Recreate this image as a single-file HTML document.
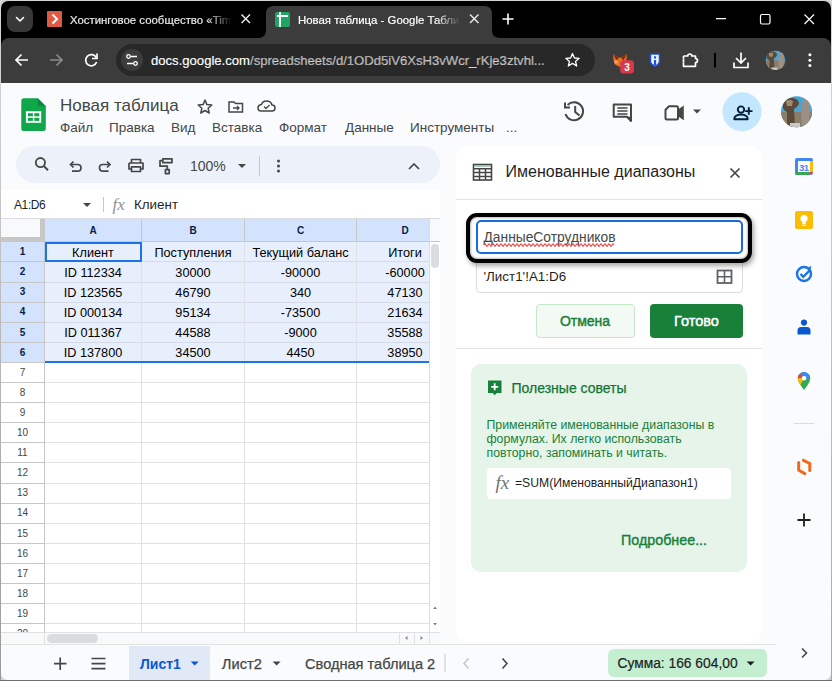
<!DOCTYPE html>
<html><head><meta charset="utf-8">
<style>
*{box-sizing:border-box;margin:0;padding:0}
html,body{width:832px;height:681px;overflow:hidden;background:#d4d4d4;font-family:"Liberation Sans",sans-serif}
#win{position:absolute;left:0;top:0;width:832px;height:681px;clip-path:inset(1px 1px 1px 1px round 7px);background:#f9fbfd}
.a{position:absolute}
.t{position:absolute;white-space:nowrap;line-height:1}
svg{position:absolute;overflow:visible}
</style></head><body>
<div style="position:absolute;left:0;top:0;width:1px;height:681px;background:linear-gradient(#d8d8d8,#9a9a9a)"></div><div style="position:absolute;left:831px;top:0;width:1px;height:681px;background:linear-gradient(#d8d8d8,#a8a8a8)"></div><div style="position:absolute;left:0;top:680px;width:832px;height:1px;background:#6e6e6e"></div>
<div id="win">
<!-- ===== TAB STRIP ===== -->
<div class="a" style="left:0;top:0;width:832px;height:50px;background:#000"></div>
<div class="a" style="left:7px;top:6px;width:26px;height:26px;border-radius:8px;background:#383838"></div>
<svg style="left:0;top:0" width="832" height="38">
  <path d="M16.5 17.5 L20 21 L23.5 17.5" stroke="#fff" stroke-width="1.6" fill="none" stroke-linecap="round" stroke-linejoin="round"/>
</svg>
<!-- tab1 -->
<div class="a" style="left:47px;top:11px;width:15px;height:16px;background:#df5a45;border-radius:1px"></div>
<svg style="left:0;top:0" width="832" height="38"><path d="M52.5 14.5 L57 19 L52.5 23.5" stroke="#fff" stroke-width="2" fill="none"/></svg>
<div class="t" style="left:70px;top:14.8px;font-size:11.4px;color:#e8e8e8;-webkit-text-stroke:0.2px #e8e8e8;width:162px;overflow:hidden;-webkit-mask-image:linear-gradient(to right,#000 138px,transparent 162px)">Хостинговое сообщество «Timeweb»</div>
<svg style="left:0;top:0" width="832" height="38"><path d="M241.5 14.5 L250 23 M250 14.5 L241.5 23" stroke="#e8e8e8" stroke-width="1.5"/></svg>
<!-- active tab -->
<svg style="left:0;top:0" width="832" height="38">
  <path d="M258 38 Q266 38 266 30 L266 14 Q266 6 274 6 L484 6 Q492 6 492 14 L492 30 Q492 38 500 38 Z" fill="#3c3c3c"/>
</svg>
<div class="a" style="left:275px;top:12px;width:15px;height:15px;background:#1fa463;border-radius:2px"></div>
<div class="a" style="left:277px;top:15px;width:11px;height:2px;background:#fff"></div>
<div class="a" style="left:279px;top:12px;width:2px;height:15px;background:#fff"></div>
<div class="t" style="left:298px;top:14.8px;font-size:11.4px;color:#fff;-webkit-text-stroke:0.2px #fff;width:162px;overflow:hidden;-webkit-mask-image:linear-gradient(to right,#000 138px,transparent 162px)">Новая таблица - Google Таблицы</div>
<svg style="left:0;top:0" width="832" height="38"><path d="M470 14.5 L478.5 23 M478.5 14.5 L470 23" stroke="#e8e8e8" stroke-width="1.5"/>
<path d="M508 13.5 V24.5 M502.5 19 H513.5" stroke="#fff" stroke-width="1.6"/>
<path d="M716 18.7 H726" stroke="#fff" stroke-width="1.2"/>
<rect x="760.5" y="14.5" width="9.5" height="9.5" rx="1.5" stroke="#fff" stroke-width="1.2" fill="none"/>
<path d="M804.5 14.5 L814 24 M814 14.5 L804.5 24" stroke="#fff" stroke-width="1.2"/>
</svg>

<!-- ===== TOOLBAR ===== -->
<div class="a" style="left:1px;top:38px;width:830px;height:45px;background:#3c3c3c;border-radius:8px 8px 0 0"></div>
<svg style="left:0;top:0" width="832" height="90">
  <path d="M28 60 H16.5 M21.5 54.5 L16 60 L21.5 65.5" stroke="#fff" stroke-width="1.7" fill="none"/>
  <path d="M50 60 H61.5 M56.5 54.5 L62 60 L56.5 65.5" stroke="#8a8a8a" stroke-width="1.7" fill="none"/>
  <path d="M96.2 57.5 A5.6 5.6 0 1 0 96.6 62" stroke="#fff" stroke-width="1.7" fill="none"/>
  <path d="M97 53.5 V58.5 H92" stroke="#fff" stroke-width="1.7" fill="none"/>
</svg>
<div class="a" style="left:116px;top:44px;width:479px;height:32px;border-radius:16px;background:#282828"></div>
<div class="a" style="left:121px;top:49px;width:22px;height:22px;border-radius:11px;background:#3c3c3c"></div>
<svg style="left:0;top:0" width="832" height="90">
  <circle cx="128.5" cy="56.5" r="1.8" stroke="#fff" stroke-width="1.3" fill="none"/>
  <path d="M131 56.5 H137" stroke="#fff" stroke-width="1.3"/>
  <circle cx="135.5" cy="63.5" r="1.8" stroke="#fff" stroke-width="1.3" fill="none"/>
  <path d="M127 63.5 H133" stroke="#fff" stroke-width="1.3"/>
</svg>
<div class="t" style="left:151px;top:54px;font-size:13.1px;color:#fff;-webkit-text-stroke:0.15px #fff">docs.google.com<span style="color:#a8a8a8">/spreadsheets/d/1ODd5iV6XsH3vWcr_rKje3ztvhl...</span></div>
<svg style="left:0;top:0" width="832" height="90">
  <path d="M572.5 53.5 L574.4 58 L579.2 58.3 L575.5 61.4 L576.7 66 L572.5 63.4 L568.3 66 L569.5 61.4 L565.8 58.3 L570.6 58 Z" stroke="#fff" stroke-width="1.3" fill="none" stroke-linejoin="round"/>
</svg>
<!-- extensions -->
<svg style="left:0;top:0" width="832" height="90">
  <path d="M613 54 L619 57.5 L621 57.5 L627 54 L626.5 59 L625 64 L620 67 L615 64.5 L613.5 60 Z" fill="#e8731f"/>
  <path d="M613 54 L619 57.5 L616.5 60.5 Z" fill="#8a2a0a"/>
  <path d="M627 54 L621 57.5 L623.5 60.5 Z" fill="#8a2a0a"/>
  <path d="M614 61 L617 60 L618 63 L615 64 Z" fill="#f8a06a"/>
  <rect x="620.2" y="60.2" width="13.7" height="13.3" rx="3.2" fill="#d8394d"/>
  <text x="627.1" y="71" font-size="10" font-weight="bold" fill="#fff" text-anchor="middle" font-family="Liberation Sans">3</text>
  <path d="M649.7 53.4 H660.2 V61.5 Q660.2 64.5 655 67.1 Q649.7 64.5 649.7 61.5 Z" fill="#1f4fe0"/>
  <path d="M651.2 54.8 H658.7 V61.3 Q658.7 63.6 655 65.5 Q651.2 63.6 651.2 61.3 Z" fill="#f2f6ff"/>
  <rect x="653.9" y="56.3" width="2.2" height="2.2" fill="#1f4fe0"/>
  <rect x="653.9" y="60" width="2.2" height="5" fill="#1f4fe0"/>
  <path d="M683.5 56 H687.8 A2 2 0 0 1 691.8 56 H695.5 V58.5 A2 2 0 0 1 695.5 62.5 V66.3 H683.5 V62.5 M683.5 58.5 V56" stroke="#fff" stroke-width="1.7" fill="none" stroke-linejoin="round"/>
  <path d="M683.5 58.5 V62.5" stroke="#fff" stroke-width="1.7"/>
  <path d="M715 53 V67.5" stroke="#000" stroke-width="2"/>
  <path d="M741 52.5 V63 M736 58 L741 63 L746 58 M734 62.5 V67.5 H748 V62.5" stroke="#fff" stroke-width="1.7" fill="none"/>
  <clipPath id="avc2"><circle cx="775.5" cy="60.3" r="9.8"/></clipPath>
  <g clip-path="url(#avc2)"><g transform="translate(775.5 60.3) scale(0.632) translate(-796.6 -111.8)">
    <rect x="780" y="96" width="34" height="32" fill="#4aa3d4"/>
    <rect x="780" y="112" width="34" height="16" fill="#8a7d6a"/>
    <path d="M783 104 Q786 97 793 98 Q799 99 799 104 Q797 108 794 109 L795 127 L787 127 L787 112 Q782 110 783 104 Z" fill="#5b4a3a"/>
    <path d="M786 101 Q790 99 793 101 L792 106 L787 106 Z" fill="#a08a70"/>
    <path d="M803 101 Q806 97 809 101 L810 110 L809 127 L802 127 L801 110 Z" fill="#9a9085"/>
    <path d="M790 123 H800 V127 H790 Z" fill="#c8c8c8"/>
  </g></g>
  <circle cx="809.9" cy="54.8" r="1.5" fill="#fff"/>
  <circle cx="809.9" cy="60.2" r="1.5" fill="#fff"/>
  <circle cx="809.9" cy="65.6" r="1.5" fill="#fff"/>
</svg>

<!-- ===== SHEETS HEADER ===== -->
<svg style="left:0;top:0" width="832" height="145">
  <path d="M23.8 98.3 H37.8 L45.8 106.3 V128.5 Q45.8 131 43.3 131 H23.8 Q21.3 131 21.3 128.5 V100.8 Q21.3 98.3 23.8 98.3 Z" fill="#0ea84b"/>
  <path d="M37.8 98.3 L45.8 106.3 H37.8 Z" fill="#0a8a3b"/>
  <rect x="25.9" y="111.2" width="15.3" height="11.6" fill="#fff"/>
  <rect x="27.9" y="113.2" width="5" height="3.1" fill="#0ea84b"/>
  <rect x="34.3" y="113.2" width="5" height="3.1" fill="#0ea84b"/>
  <rect x="27.9" y="117.8" width="5" height="3.1" fill="#0ea84b"/>
  <rect x="34.3" y="117.8" width="5" height="3.1" fill="#0ea84b"/>
</svg>
<div class="t" style="left:60px;top:97px;font-size:17px;color:#444746">Новая таблица</div>
<svg style="left:0;top:0" width="832" height="145">
  <path d="M205 100 L206.9 104.6 L211.8 105 L208.1 108.2 L209.2 113 L205 110.5 L200.8 113 L201.9 108.2 L198.2 105 L203.1 104.6 Z" stroke="#444746" stroke-width="1.5" fill="none" stroke-linejoin="round"/>
  <path d="M229 112 V102 H234 L235.5 103.5 H242.5 V112 Z" stroke="#444746" stroke-width="1.5" fill="none"/>
  <path d="M233 108 H239 M237 106 L239 108 L237 110" stroke="#444746" stroke-width="1.3" fill="none"/>
  <path d="M261 111 H272 Q275 111 275 108 Q275 105 272 105 Q271 101 266.5 101 Q262.5 101 261.5 104.5 Q258 105 258 108 Q258 111 261 111 Z" stroke="#444746" stroke-width="1.5" fill="none"/>
  <path d="M264 106.5 L266 108.5 L269.5 105" stroke="#444746" stroke-width="1.3" fill="none"/>
</svg>
<div class="t" style="left:60px;top:121px;font-size:13.5px;color:#444746;word-spacing:0">
 <span style="position:absolute;left:0">Файл</span><span style="position:absolute;left:49px">Правка</span><span style="position:absolute;left:111px">Вид</span><span style="position:absolute;left:152px">Вставка</span><span style="position:absolute;left:219px">Формат</span><span style="position:absolute;left:285px">Данные</span><span style="position:absolute;left:350px">Инструменты</span><span style="position:absolute;left:446px">...</span>
</div>
<svg style="left:0;top:0" width="832" height="145">
  <path d="M567.6 105 A9 9 0 1 1 565.5 114" stroke="#444746" stroke-width="2" fill="none"/>
  <path d="M565 102.5 V107.5 H570" stroke="#444746" stroke-width="2" fill="none"/>
  <path d="M575.2 106 V112 L579.5 115.5" stroke="#444746" stroke-width="2" fill="none"/>
  <path d="M613.7 104.5 H631 V121 L627 116.8 H613.7 Z" stroke="#444746" stroke-width="2" fill="none" stroke-linejoin="round"/>
  <path d="M617.3 108 H627.5 M617.3 111 H627.5 M617.3 114 H627.5" stroke="#444746" stroke-width="1.7"/>
  <path d="M627 116.8 L631 121 V116.8 Z" fill="#444746"/>
  <path d="M669 106.3 H676.5 Q678 106.3 678 107.8 V118 Q678 119.5 676.5 119.5 H667 Q665.5 119.5 665.5 118 V109.8 Z" stroke="#444746" stroke-width="2" fill="none" stroke-linejoin="round"/>
  <path d="M678 109.5 L683.8 105.5 V120.3 L678 116.3 Z" fill="#444746"/>
  <path d="M693 109.5 H701 L697 113.5 Z" fill="#444746"/>
  <circle cx="742" cy="111.8" r="19.5" fill="#c2e7ff"/>
  <circle cx="741" cy="109.6" r="3.2" stroke="#001d35" stroke-width="1.9" fill="none"/>
  <path d="M734.3 119.2 Q734.3 114.6 741 114.6 Q747.7 114.6 747.7 119.2 Z" stroke="#001d35" stroke-width="1.9" fill="none" stroke-linejoin="round"/>
  <path d="M748.8 107.3 V114.8 M745.1 111.1 H752.5" stroke="#001d35" stroke-width="1.9"/>
  <clipPath id="avc"><circle cx="796.6" cy="111.8" r="15.5"/></clipPath>
  <g clip-path="url(#avc)">
    <rect x="780" y="96" width="34" height="32" fill="#4aa3d4"/>
    <rect x="780" y="112" width="34" height="16" fill="#8a7d6a"/>
    <path d="M783 104 Q786 97 793 98 Q799 99 799 104 Q797 108 794 109 L795 127 L787 127 L787 112 Q782 110 783 104 Z" fill="#5b4a3a"/>
    <path d="M786 101 Q790 99 793 101 L792 106 L787 106 Z" fill="#a08a70"/>
    <path d="M803 101 Q806 97 809 101 L810 110 L809 127 L802 127 L801 110 Z" fill="#9a9085"/>
    <path d="M804 99 L805 96 L807 99 Z" fill="#d8d0c0"/>
    <path d="M790 123 H800 V127 H790 Z" fill="#c8c8c8"/>
  </g>
</svg>

<!-- ===== SHEETS TOOLBAR ===== -->
<div class="a" style="left:16px;top:146px;width:424px;height:37px;border-radius:18.5px;background:#edf2fa"></div>
<svg style="left:0;top:0" width="832" height="220">
  <circle cx="40.4" cy="162.6" r="4.6" stroke="#444746" stroke-width="1.8" fill="none"/>
  <path d="M43.7 165.9 L48 170.2" stroke="#444746" stroke-width="2"/>
  <path d="M71 164.5 H77.5 Q81 164.5 81 167.8 Q81 171.2 77.5 171.2 H72" stroke="#444746" stroke-width="1.7" fill="none"/>
  <path d="M73.5 161.5 L70.5 164.5 L73.5 167.5" stroke="#444746" stroke-width="1.7" fill="none"/>
  <path d="M109.5 164.5 H103 Q99.5 164.5 99.5 167.8 Q99.5 171.2 103 171.2 H108.5" stroke="#444746" stroke-width="1.7" fill="none"/>
  <path d="M107 161.5 L110 164.5 L107 167.5" stroke="#444746" stroke-width="1.7" fill="none"/>
  <path d="M131.5 163 V159.5 H140.5 V163 M129 163 H143 V169 H140.5 M131.5 169 H129 V163 M131.5 166.8 H140.5 V171.5 H131.5 Z" stroke="#444746" stroke-width="1.7" fill="none" stroke-linejoin="round"/>
  <path d="M162.8 158.8 H172 V162.6 H162.8 Z M162.8 160.7 H160 V166.2 H167.3 V169.6 M165.4 169.6 H169.2 V173.6 H165.4 Z" stroke="#444746" stroke-width="1.7" fill="none" stroke-linejoin="round"/>
  <path d="M238 164 H246 L242 168 Z" fill="#444746"/>
  <path d="M259.5 156 V176" stroke="#c7c7c7" stroke-width="1"/>
  <circle cx="278.5" cy="161" r="1.5" fill="#444746"/><circle cx="278.5" cy="166" r="1.5" fill="#444746"/><circle cx="278.5" cy="171" r="1.5" fill="#444746"/>
  <path d="M409 169 L414 164 L419 169" stroke="#444746" stroke-width="1.7" fill="none"/>
</svg>
<div class="t" style="left:190px;top:159px;font-size:14px;color:#444746">100%</div>
<!-- formula bar -->
<div class="a" style="left:1px;top:190px;width:439px;height:28px;background:#fff"></div>
<div class="t" style="left:14px;top:198.5px;font-size:12px;letter-spacing:-0.4px;color:#1f1f1f">A1:D6</div>
<svg style="left:0;top:0" width="832" height="220">
  <path d="M83 203 H91 L87 207 Z" fill="#444746"/>
  <path d="M103.5 197 V212" stroke="#c7c7c7" stroke-width="1"/>
</svg>
<div class="t" style="left:112.5px;top:196px;font-size:17px;color:#909090;font-family:'Liberation Serif',serif;font-style:italic">fx</div>
<div class="t" style="left:134px;top:197.5px;font-size:13.4px;color:#1f1f1f">Клиент</div>
<!-- ===== GRID ===== -->
<div class="a" style="left:1px;top:218px;width:439px;height:415px;background:#fff"></div>
<div class="a" style="left:1px;top:218px;width:439px;height:1px;background:#dadce0"></div>
<div class="a" style="left:45px;top:219px;width:385px;height:22px;background:#d3e3fd"></div>
<div class="a" style="left:430px;top:219px;width:10px;height:22px;background:#f8f9fa"></div>
<div class="a" style="left:1px;top:219px;width:44px;height:23px;background:#c7c7c7"></div>
<div class="a" style="left:1px;top:219px;width:39px;height:18px;background:#f8f9fa"></div>
<div class="a" style="left:45px;top:242px;width:385px;height:120px;background:#e8effc"></div>
<div class="a" style="left:1px;top:242px;width:43px;height:120px;background:#d3e3fd"></div>
<div class="a" style="left:1px;top:261.40px;width:43px;height:1px;background:#c7c7c7"></div>
<div class="a" style="left:45px;top:261.40px;width:385px;height:1px;background:#d5dbe6"></div>
<div class="a" style="left:1px;top:281.50px;width:43px;height:1px;background:#c7c7c7"></div>
<div class="a" style="left:45px;top:281.50px;width:385px;height:1px;background:#d5dbe6"></div>
<div class="a" style="left:1px;top:301.60px;width:43px;height:1px;background:#c7c7c7"></div>
<div class="a" style="left:45px;top:301.60px;width:385px;height:1px;background:#d5dbe6"></div>
<div class="a" style="left:1px;top:321.70px;width:43px;height:1px;background:#c7c7c7"></div>
<div class="a" style="left:45px;top:321.70px;width:385px;height:1px;background:#d5dbe6"></div>
<div class="a" style="left:1px;top:341.80px;width:43px;height:1px;background:#c7c7c7"></div>
<div class="a" style="left:45px;top:341.80px;width:385px;height:1px;background:#d5dbe6"></div>
<div class="a" style="left:1px;top:361.90px;width:43px;height:1px;background:#c7c7c7"></div>
<div class="a" style="left:45px;top:361.90px;width:385px;height:1px;background:#e1e1e1"></div>
<div class="a" style="left:1px;top:382.00px;width:43px;height:1px;background:#c7c7c7"></div>
<div class="a" style="left:45px;top:382.00px;width:385px;height:1px;background:#e1e1e1"></div>
<div class="a" style="left:1px;top:402.10px;width:43px;height:1px;background:#c7c7c7"></div>
<div class="a" style="left:45px;top:402.10px;width:385px;height:1px;background:#e1e1e1"></div>
<div class="a" style="left:1px;top:422.20px;width:43px;height:1px;background:#c7c7c7"></div>
<div class="a" style="left:45px;top:422.20px;width:385px;height:1px;background:#e1e1e1"></div>
<div class="a" style="left:1px;top:442.30px;width:43px;height:1px;background:#c7c7c7"></div>
<div class="a" style="left:45px;top:442.30px;width:385px;height:1px;background:#e1e1e1"></div>
<div class="a" style="left:1px;top:462.40px;width:43px;height:1px;background:#c7c7c7"></div>
<div class="a" style="left:45px;top:462.40px;width:385px;height:1px;background:#e1e1e1"></div>
<div class="a" style="left:1px;top:482.50px;width:43px;height:1px;background:#c7c7c7"></div>
<div class="a" style="left:45px;top:482.50px;width:385px;height:1px;background:#e1e1e1"></div>
<div class="a" style="left:1px;top:502.60px;width:43px;height:1px;background:#c7c7c7"></div>
<div class="a" style="left:45px;top:502.60px;width:385px;height:1px;background:#e1e1e1"></div>
<div class="a" style="left:1px;top:522.70px;width:43px;height:1px;background:#c7c7c7"></div>
<div class="a" style="left:45px;top:522.70px;width:385px;height:1px;background:#e1e1e1"></div>
<div class="a" style="left:1px;top:542.80px;width:43px;height:1px;background:#c7c7c7"></div>
<div class="a" style="left:45px;top:542.80px;width:385px;height:1px;background:#e1e1e1"></div>
<div class="a" style="left:1px;top:562.90px;width:43px;height:1px;background:#c7c7c7"></div>
<div class="a" style="left:45px;top:562.90px;width:385px;height:1px;background:#e1e1e1"></div>
<div class="a" style="left:1px;top:583.00px;width:43px;height:1px;background:#c7c7c7"></div>
<div class="a" style="left:45px;top:583.00px;width:385px;height:1px;background:#e1e1e1"></div>
<div class="a" style="left:1px;top:603.10px;width:43px;height:1px;background:#c7c7c7"></div>
<div class="a" style="left:45px;top:603.10px;width:385px;height:1px;background:#e1e1e1"></div>
<div class="a" style="left:1px;top:623.20px;width:43px;height:1px;background:#c7c7c7"></div>
<div class="a" style="left:45px;top:623.20px;width:385px;height:1px;background:#e1e1e1"></div>
<div class="a" style="left:44px;top:242px;width:1px;height:391px;background:#c7c7c7"></div>
<div class="a" style="left:45px;top:241px;width:395px;height:1px;background:#c7c7c7"></div>
<div class="a" style="left:141px;top:219px;width:1px;height:22px;background:#c7c7c7"></div>
<div class="a" style="left:141px;top:242px;width:1px;height:391px;background:#e1e1e1"></div>
<div class="a" style="left:244px;top:219px;width:1px;height:22px;background:#c7c7c7"></div>
<div class="a" style="left:244px;top:242px;width:1px;height:391px;background:#e1e1e1"></div>
<div class="a" style="left:356px;top:219px;width:1px;height:22px;background:#c7c7c7"></div>
<div class="a" style="left:356px;top:242px;width:1px;height:391px;background:#e1e1e1"></div>
<div class="a" style="left:429px;top:219px;width:1px;height:414px;background:#dadce0"></div>
<div class="a" style="left:45px;top:361px;width:384px;height:2px;background:#1a73e8"></div>
<div class="a" style="left:45px;top:242px;width:97px;height:20px;border:2px solid #1a73e8"></div>
<div class="t" style="left:63px;width:60px;text-align:center;top:226px;font-size:10px;font-weight:bold;color:#041e49">A</div>
<div class="t" style="left:163px;width:60px;text-align:center;top:226px;font-size:10px;font-weight:bold;color:#041e49">B</div>
<div class="t" style="left:270.5px;width:60px;text-align:center;top:226px;font-size:10px;font-weight:bold;color:#041e49">C</div>
<div class="t" style="left:375px;width:60px;text-align:center;top:226px;font-size:10px;font-weight:bold;color:#041e49">D</div>
<div class="t" style="left:1px;width:43px;text-align:center;top:247.1px;font-size:10px;font-weight:bold;color:#041e49">1</div>
<div class="t" style="left:1px;width:43px;text-align:center;top:267.2px;font-size:10px;font-weight:bold;color:#041e49">2</div>
<div class="t" style="left:1px;width:43px;text-align:center;top:287.3px;font-size:10px;font-weight:bold;color:#041e49">3</div>
<div class="t" style="left:1px;width:43px;text-align:center;top:307.4px;font-size:10px;font-weight:bold;color:#041e49">4</div>
<div class="t" style="left:1px;width:43px;text-align:center;top:327.5px;font-size:10px;font-weight:bold;color:#041e49">5</div>
<div class="t" style="left:1px;width:43px;text-align:center;top:347.6px;font-size:10px;font-weight:bold;color:#041e49">6</div>
<div class="t" style="left:1px;width:43px;text-align:center;top:367.7px;font-size:10px;font-weight:normal;color:#444746">7</div>
<div class="t" style="left:1px;width:43px;text-align:center;top:387.8px;font-size:10px;font-weight:normal;color:#444746">8</div>
<div class="t" style="left:1px;width:43px;text-align:center;top:407.9px;font-size:10px;font-weight:normal;color:#444746">9</div>
<div class="t" style="left:1px;width:43px;text-align:center;top:428.0px;font-size:10px;font-weight:normal;color:#444746">10</div>
<div class="t" style="left:1px;width:43px;text-align:center;top:448.1px;font-size:10px;font-weight:normal;color:#444746">11</div>
<div class="t" style="left:1px;width:43px;text-align:center;top:468.2px;font-size:10px;font-weight:normal;color:#444746">12</div>
<div class="t" style="left:1px;width:43px;text-align:center;top:488.3px;font-size:10px;font-weight:normal;color:#444746">13</div>
<div class="t" style="left:1px;width:43px;text-align:center;top:508.4px;font-size:10px;font-weight:normal;color:#444746">14</div>
<div class="t" style="left:1px;width:43px;text-align:center;top:528.5px;font-size:10px;font-weight:normal;color:#444746">15</div>
<div class="t" style="left:1px;width:43px;text-align:center;top:548.6px;font-size:10px;font-weight:normal;color:#444746">16</div>
<div class="t" style="left:1px;width:43px;text-align:center;top:568.7px;font-size:10px;font-weight:normal;color:#444746">17</div>
<div class="t" style="left:1px;width:43px;text-align:center;top:588.8px;font-size:10px;font-weight:normal;color:#444746">18</div>
<div class="t" style="left:1px;width:43px;text-align:center;top:608.9px;font-size:10px;font-weight:normal;color:#444746">19</div>
<div class="t" style="left:1px;width:43px;text-align:center;top:629.0px;font-size:10px;font-weight:normal;color:#444746">20</div>
<div class="t" style="left:33px;width:120px;text-align:center;top:246.8px;font-size:12.7px;color:#000">Клиент</div>
<div class="t" style="left:133px;width:120px;text-align:center;top:246.8px;font-size:12.7px;color:#000">Поступления</div>
<div class="t" style="left:240.5px;width:120px;text-align:center;top:246.8px;font-size:12.7px;color:#000">Текущий баланс</div>
<div class="t" style="left:345px;width:120px;text-align:center;top:246.8px;font-size:12.7px;color:#000">Итоги</div>
<div class="t" style="left:33px;width:120px;text-align:center;top:266.9px;font-size:12.7px;color:#000">ID 112334</div>
<div class="t" style="left:133px;width:120px;text-align:center;top:266.9px;font-size:12.7px;color:#000">30000</div>
<div class="t" style="left:240.5px;width:120px;text-align:center;top:266.9px;font-size:12.7px;color:#000">-90000</div>
<div class="t" style="left:345px;width:120px;text-align:center;top:266.9px;font-size:12.7px;color:#000">-60000</div>
<div class="t" style="left:33px;width:120px;text-align:center;top:287.0px;font-size:12.7px;color:#000">ID 123565</div>
<div class="t" style="left:133px;width:120px;text-align:center;top:287.0px;font-size:12.7px;color:#000">46790</div>
<div class="t" style="left:240.5px;width:120px;text-align:center;top:287.0px;font-size:12.7px;color:#000">340</div>
<div class="t" style="left:345px;width:120px;text-align:center;top:287.0px;font-size:12.7px;color:#000">47130</div>
<div class="t" style="left:33px;width:120px;text-align:center;top:307.1px;font-size:12.7px;color:#000">ID 000134</div>
<div class="t" style="left:133px;width:120px;text-align:center;top:307.1px;font-size:12.7px;color:#000">95134</div>
<div class="t" style="left:240.5px;width:120px;text-align:center;top:307.1px;font-size:12.7px;color:#000">-73500</div>
<div class="t" style="left:345px;width:120px;text-align:center;top:307.1px;font-size:12.7px;color:#000">21634</div>
<div class="t" style="left:33px;width:120px;text-align:center;top:327.2px;font-size:12.7px;color:#000">ID 011367</div>
<div class="t" style="left:133px;width:120px;text-align:center;top:327.2px;font-size:12.7px;color:#000">44588</div>
<div class="t" style="left:240.5px;width:120px;text-align:center;top:327.2px;font-size:12.7px;color:#000">-9000</div>
<div class="t" style="left:345px;width:120px;text-align:center;top:327.2px;font-size:12.7px;color:#000">35588</div>
<div class="t" style="left:33px;width:120px;text-align:center;top:347.3px;font-size:12.7px;color:#000">ID 137800</div>
<div class="t" style="left:133px;width:120px;text-align:center;top:347.3px;font-size:12.7px;color:#000">34500</div>
<div class="t" style="left:240.5px;width:120px;text-align:center;top:347.3px;font-size:12.7px;color:#000">4450</div>
<div class="t" style="left:345px;width:120px;text-align:center;top:347.3px;font-size:12.7px;color:#000">38950</div>
<div class="a" style="left:430px;top:242px;width:10px;height:391px;background:#fff"></div>
<div class="a" style="left:431px;top:243.5px;width:8px;height:24px;border-radius:4px;background:#dadce0"></div>
<svg style="left:0;top:0" width="832" height="681"><path d="M433 609 L435 606.5 L437 609 Z M433 623 L435 625.5 L437 623 Z" fill="#80868b"/></svg>
<div class="a" style="left:1px;top:632px;width:439px;height:1px;background:#e1e1e1"></div>
<div class="a" style="left:1px;top:633px;width:439px;height:11px;background:#f8f9fa"></div>
<div class="a" style="left:44px;top:633px;width:1px;height:11px;background:#e1e1e1"></div>
<div class="a" style="left:47px;top:634px;width:51px;height:8.5px;border-radius:4.5px;background:#dadce0"></div>
<svg style="left:0;top:0" width="832" height="681"><path d="M407.5 636 L405 638 L407.5 640 Z M420.5 636 L423 638 L420.5 640 Z" fill="#80868b"/><path d="M399.5 633 V644 M414.5 633 V644 M429.5 633 V644" stroke="#e1e1e1"/></svg>

<!-- ===== SIDE PANEL ===== -->
<div class="a" style="left:456px;top:145.5px;width:306px;height:497px;border-radius:14px;background:#fff"></div>
<svg style="left:0;top:0" width="832" height="681">
  <rect x="473.5" y="164.5" width="18" height="15.5" fill="none" stroke="#444746" stroke-width="1.6"/>
  <path d="M473.5 168.8 H491.5 M473.5 172.6 H491.5 M473.5 176.4 H491.5 M479.5 168.8 V180 M485.5 168.8 V180" stroke="#444746" stroke-width="1.5"/>
  <path d="M475 166 H490" stroke="#8fbf9f" stroke-width="1.5"/>
  <path d="M730.5 168.5 L739.5 177.5 M739.5 168.5 L730.5 177.5" stroke="#444746" stroke-width="1.7"/>
</svg>
<div class="t" style="left:505.5px;top:164px;font-size:16px;color:#1f1f1f">Именованные диапазоны</div>
<div class="a" style="left:456px;top:199px;width:306px;height:1px;background:#e1e3e1"></div>
<!-- range input -->
<div class="a" style="left:475.5px;top:255px;width:267.5px;height:38px;border:1px solid #dadce0;border-radius:4px;background:#fff"></div>
<div class="t" style="left:483.5px;top:270px;font-size:13.4px;color:#1f1f1f">'Лист1'!A1:D6</div>
<svg style="left:0;top:0" width="832" height="681">
  <rect x="717.5" y="270.5" width="14" height="12.5" fill="none" stroke="#5f6368" stroke-width="1.8"/>
  <path d="M724.5 270.5 V283 M717.5 276.7 H731.5" stroke="#5f6368" stroke-width="1.6"/>
</svg>
<!-- highlight box -->
<div class="a" style="left:466px;top:213px;width:285.5px;height:49.5px;border:4.6px solid #000;border-radius:11px;background:#fff;box-shadow:2px 3px 5px rgba(0,0,0,0.35), inset 0 0 1.5px 1.2px rgba(0,0,0,0.22)"></div>
<div class="a" style="left:475.5px;top:219.5px;width:267.5px;height:34px;border:2px solid #1a6ae0;border-radius:5px;background:#fff"></div>
<div class="t" style="left:483.5px;top:230.8px;font-size:13.8px;color:#444746">ДанныеСотрудников</div>
<svg style="left:0;top:0" width="832" height="681">
  <path d="M484 245 q1 -2.4 2 0 t2 0 t2 0 t2 0 t2 0 t2 0 t2 0 t2 0 t2 0 t2 0 t2 0 t2 0 t2 0 t2 0 t2 0 t2 0 t2 0 t2 0 t2 0 t2 0 t2 0 t2 0 t2 0 t2 0 t2 0 t2 0 t2 0 t2 0 t2 0 t2 0 t2 0 t2 0 t2 0 t2 0 t2 0 t2 0 t2 0 t2 0 t2 0 t2 0 t2 0 t2 0 t2 0 t2 0 t2 0 t2 0 t2 0 t2 0 t2 0 t2 0 t2 0 t2 0 t2 0 t2 0 t2 0 t2 0 t2 0 t2 0 t2 0 t2 0 t2 0 t2 0 t2 0 t2 0 t2 0" stroke="#e53935" stroke-width="1.1" fill="none"/>
</svg>
<!-- buttons -->
<div class="a" style="left:535.5px;top:304px;width:99px;height:34px;border:1px solid #c4e7c8;border-radius:4px;background:#f3faf4"></div>
<div class="t" style="left:535.5px;width:99px;text-align:center;top:314px;font-size:14px;color:#188038;-webkit-text-stroke:0.45px #188038">Отмена</div>
<div class="a" style="left:650px;top:304px;width:93px;height:34px;border-radius:4px;background:#188038"></div>
<div class="t" style="left:650px;width:93px;text-align:center;top:314px;font-size:14.5px;color:#fff;-webkit-text-stroke:0.45px #fff">Готово</div>
<div class="a" style="left:456px;top:348px;width:306px;height:1px;background:#e1e3e1"></div>
<!-- tips card -->
<div class="a" style="left:471px;top:364px;width:276px;height:208px;border-radius:10px;background:#e6f4ea"></div>
<svg style="left:0;top:0" width="832" height="681">
  <path d="M488 380.5 H501.5 V393 H496.8 L494.7 395.3 L492.6 393 H488 Z" fill="#188038"/>
  <path d="M494.7 383.3 V390.3 M491.2 386.8 H498.2" stroke="#fff" stroke-width="1.8"/>
</svg>
<div class="t" style="left:511.5px;top:381px;font-size:14px;color:#137333;-webkit-text-stroke:0.25px #137333">Полезные советы</div>
<div class="a" style="left:486.5px;top:419.4px;font-size:12.3px;line-height:13.7px;color:#188038;width:250px">Применяйте именованные диапазоны в<br>формулах. Их легко использовать<br>повторно, запоминать и читать.</div>
<div class="a" style="left:486.5px;top:467.5px;width:244.5px;height:31.5px;border-radius:4px;background:#fff"></div>
<div class="t" style="left:495.5px;top:473px;font-size:19px;color:#6f7377;font-family:'Liberation Serif',serif;font-style:italic">fx</div>
<div class="t" style="left:515px;top:477px;font-size:12.2px;color:#1f1f1f">=SUM(ИменованныйДиапазон1)</div>
<div class="t" style="left:621px;top:533px;font-size:14.3px;color:#188038;-webkit-text-stroke:0.4px #188038">Подробнее...</div>

<!-- ===== RIGHT SIDEBAR ===== -->
<svg style="left:0;top:0" width="832" height="681">
  <rect x="795" y="158" width="18" height="17" rx="2" fill="#4285f4"/>
  <rect x="798" y="161" width="12" height="11" fill="#fff"/>
  <path d="M795 172 H810 V175 H797 Q795 175 795 173 Z" fill="#34a853"/>
  <path d="M810 161 H813 V172 H810 Z" fill="#fbbc04"/>
  <path d="M810 172 H813 L810 175 Z" fill="#ea4335"/>
  <text x="803.8" y="170.8" font-size="9.5" font-weight="bold" fill="#4285f4" text-anchor="middle" font-family="Liberation Sans" letter-spacing="-0.5">31</text>
  <rect x="795" y="211" width="18" height="18" rx="2" fill="#fbbc04"/>
  <circle cx="804" cy="218.5" r="3.6" fill="#fff"/>
  <rect x="802.3" y="222" width="3.4" height="2.2" fill="#fff"/>
  <rect x="802" y="224.8" width="4" height="1" fill="#fff"/>
  <circle cx="804" cy="274" r="7" stroke="#1a73e8" stroke-width="2.4" fill="none"/>
  <path d="M800.5 274 L803.3 276.8 L810.5 269.5" stroke="#1a73e8" stroke-width="2.4" fill="none"/>
  <path d="M808 267.5 L811.5 266 L810.5 269.5 Z" fill="#1a73e8"/>
  <circle cx="804" cy="322.6" r="3.1" fill="#0b57d0"/>
  <path d="M797.5 334.4 V330.5 Q797.5 327 801 327 H807 Q810.5 327 810.5 330.5 V334.4 Z" fill="#0b57d0"/>
  <path d="M804 390 Q797.8 382.5 797.8 378.3 A6.2 6.2 0 0 1 810.2 378.3 Q810.2 382.5 804 390 Z" fill="#34a853"/>
  <path d="M797.8 378.3 A6.2 6.2 0 0 1 800 373.6 L804 378.3 Z" fill="#ea4335"/>
  <path d="M800 373.6 A6.2 6.2 0 0 1 810.2 378.3 L804 378.3 Z" fill="#4285f4"/>
  <path d="M797.8 378.3 Q797.8 381.5 800.3 385 L804 378.3 Z" fill="#fbbc04"/>
  <circle cx="804" cy="378.3" r="2.3" fill="#fff"/>
  <path d="M794 423.5 H814" stroke="#dadce0" stroke-width="1"/>
  <path d="M798.7 462.6 V470.3 L804.9 473.6 M803.4 460.3 L809.8 463.5 V470.5" stroke="#ee6a1c" stroke-width="3" fill="none" stroke-linecap="round" stroke-linejoin="round"/>
  <path d="M804 513.5 V526.5 M797.5 520 H810.5" stroke="#1f1f1f" stroke-width="1.8"/>
</svg>

<!-- ===== BOTTOM BAR ===== -->
<div class="a" style="left:1px;top:644px;width:775px;height:1px;background:#e1e3e1"></div>
<svg style="left:0;top:0" width="832" height="681">
  <path d="M60.2 657.5 V670 M54 663.7 H66.5" stroke="#444746" stroke-width="1.7"/>
  <path d="M91.5 658.5 H105.5 M91.5 663.6 H105.5 M91.5 668.7 H105.5" stroke="#444746" stroke-width="1.7"/>
</svg>
<div class="a" style="left:129px;top:645.5px;width:81px;height:35px;background:#e1e9f7"></div>
<div class="t" style="left:140px;top:656.5px;font-size:14px;font-weight:bold;color:#0b57d0">Лист1</div>
<div class="t" style="left:221.8px;top:656.5px;font-size:14.7px;color:#444746;-webkit-text-stroke:0.25px #444746">Лист2</div>
<div class="t" style="left:305px;top:656.5px;font-size:14.6px;color:#444746;-webkit-text-stroke:0.25px #444746">Сводная таблица 2</div>
<svg style="left:0;top:0" width="832" height="681">
  <path d="M190.7 661.5 H198.7 L194.7 665.5 Z" fill="#0b57d0"/>
  <path d="M272.6 661.5 H280.6 L276.6 665.5 Z" fill="#444746"/>
  <path d="M445 653.5 V672" stroke="#c7c7c7" stroke-width="1"/>
  <path d="M468.5 658.5 L464 663.5 L468.5 668.5" stroke="#c7c7c7" stroke-width="1.6" fill="none"/>
  <path d="M502.5 658.5 L507 663.5 L502.5 668.5" stroke="#444746" stroke-width="1.6" fill="none"/>
</svg>
<div class="a" style="left:608px;top:648.7px;width:159px;height:28.3px;border-radius:6px;background:#c4eed0"></div>
<div class="t" style="left:617.5px;top:656.5px;font-size:13.8px;color:#1f1f1f;-webkit-text-stroke:0.2px #1f1f1f">Сумма: 166 604,00</div>
<svg style="left:0;top:0" width="832" height="681">
  <path d="M746.6 661.5 H754.6 L750.6 665.5 Z" fill="#1f1f1f"/>
  <path d="M802 648.5 L806.5 653 L802 657.5" stroke="#444746" stroke-width="1.6" fill="none"/>
</svg>
</div>
</body></html>
